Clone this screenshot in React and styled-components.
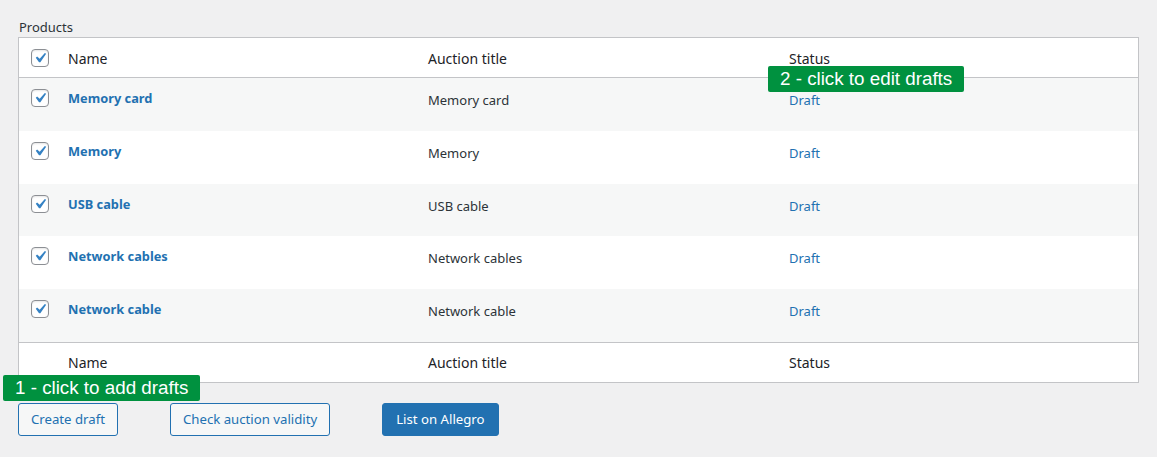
import React from "react";
import styled, { createGlobalStyle } from "styled-components";

const Global = createGlobalStyle`
  html, body { margin: 0; padding: 0; background: #f0f0f1; }
  body { font-family: "Noto Sans", "Segoe UI", sans-serif; color: #2c3338; }
  * { box-sizing: border-box; }
`;

const Page = styled.div`
  position: relative;
  padding: 17px 18px 0 18px;
  width: 1157px;
  height: 457px;
`;

const SectionLabel = styled.div`
  font-size: 13px;
  line-height: 20px;
  color: #2c3338;
  padding-left: 1px;
`;

const Table = styled.div`
  border: 1px solid #c3c4c7;
  background: #fff;
`;

const Row = styled.div`
  display: grid;
  grid-template-columns: 49px 360px 361px 1fr;
  height: ${(p) => p.$h}px;
  background: ${(p) => (p.$striped ? "#f6f7f7" : "#fff")};
  border-bottom: ${(p) => (p.$divider ? "1px solid #c3c4c7" : "none")};
  border-top: ${(p) => (p.$topDivider ? "1px solid #c3c4c7" : "none")};
`;

const Cell = styled.div`
  padding-top: ${(p) => p.$pt}px;
  padding-left: ${(p) => p.$pl || 0}px;
  font-size: ${(p) => (p.$head ? 14 : 13)}px;
  line-height: 20px;
  color: ${(p) => (p.$head ? "#1d2327" : "#2c3338")};
  white-space: nowrap;
`;

const NameLink = styled.a`
  font-weight: 700;
  font-size: 12.8px;
  color: #2271b1;
  text-decoration: none;
`;

const StatusLink = styled.a`
  font-size: 13px;
  color: #2271b1;
  text-decoration: none;
`;

const Box = styled.span`
  display: block;
  width: 18px;
  height: 18px;
  border: 1px solid #8c8f94;
  border-radius: 4px;
  background: #fff;
  box-shadow: inset 0 1px 2px rgba(0, 0, 0, 0.1);
  svg { display: block; margin: -2px 0 0 -2px; }
`;

const Checkbox = () => (
  <Box>
    <svg width="20" height="20" viewBox="0 0 20 20">
      <path
        d="M14.83 4.89l1.34.94-5.81 8.38H9.02L5.78 9.67l1.34-1.25 2.57 2.4z"
        fill="#3582c4"
      />
    </svg>
  </Box>
);

const Actions = styled.div`
  display: flex;
  gap: 52px;
  margin-top: 20px;
`;

const Button = styled.button`
  height: 33px;
  padding: 0 ${(p) => (p.$primary ? 13 : 12)}px;
  font-family: inherit;
  font-size: 13.2px;
  border-radius: 3px;
  border: 1px solid #2271b1;
  background: ${(p) => (p.$primary ? "#2271b1" : "#f6f7f7")};
  color: ${(p) => (p.$primary ? "#fff" : "#2271b1")};
  cursor: pointer;
`;

const Hint = styled.div`
  position: absolute;
  left: ${(p) => p.$x}px;
  top: ${(p) => p.$y}px;
  height: 26px;
  padding: 0 12px;
  background: #00913f;
  color: #fff;
  border-radius: 2px;
  font-family: "Liberation Sans", Arial, sans-serif;
  font-size: 18.8px;
  line-height: 26px;
  white-space: nowrap;
`;

const products = [
  "Memory card",
  "Memory",
  "USB cable",
  "Network cables",
  "Network cable",
];

export default function App() {
  return (
    <>
      <Global />
      <Page>
        <SectionLabel>Products</SectionLabel>
        <Table>
          <Row $h={40} $divider>
            <Cell $pt={11} $pl={12}><Checkbox /></Cell>
            <Cell $head $pt={11}>Name</Cell>
            <Cell $head $pt={11}>Auction title</Cell>
            <Cell $head $pt={11}>Status</Cell>
          </Row>
          {products.map((p, i) => (
            <Row key={p} $h={52.8} $striped={i % 2 === 0}>
              <Cell $pt={11} $pl={12}><Checkbox /></Cell>
              <Cell $pt={10}><NameLink href="#">{p}</NameLink></Cell>
              <Cell $pt={12}>{p}</Cell>
              <Cell $pt={12}><StatusLink href="#">Draft</StatusLink></Cell>
            </Row>
          ))}
          <Row $h={40} $topDivider>
            <Cell />
            <Cell $head $pt={10}>Name</Cell>
            <Cell $head $pt={10}>Auction title</Cell>
            <Cell $head $pt={10}>Status</Cell>
          </Row>
        </Table>
        <Actions>
          <Button>Create draft</Button>
          <Button>Check auction validity</Button>
          <Button $primary>List on Allegro</Button>
        </Actions>
        <Hint $x={768} $y={66}>2 - click to edit drafts</Hint>
        <Hint $x={3} $y={375}>1 - click to add drafts</Hint>
      </Page>
    </>
  );
}
